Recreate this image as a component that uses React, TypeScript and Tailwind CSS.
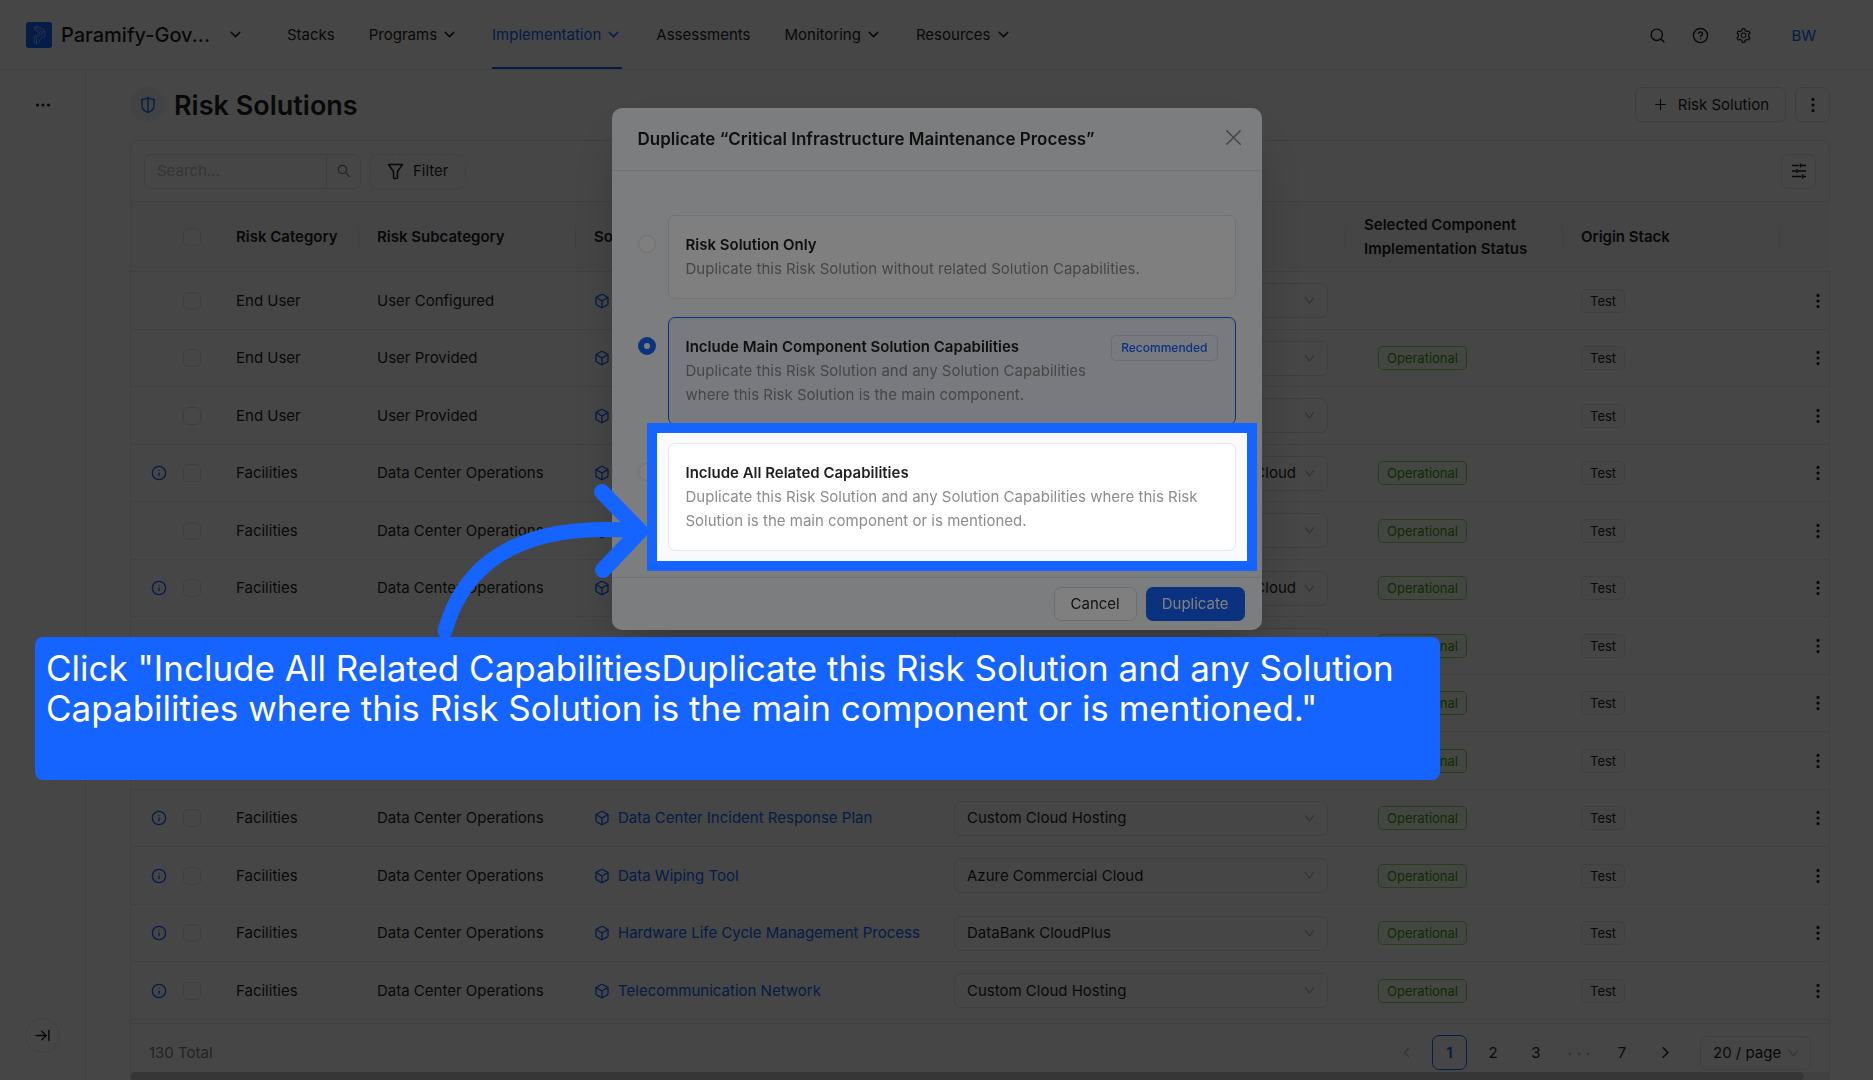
import type { ReactNode } from 'react';
import {
  ArrowRightToLine,
  Box,
  ChevronDown,
  ChevronLeft,
  ChevronRight,
  CircleHelp,
  Info,
  Plus,
  Search,
  X,
} from 'lucide-react';
import { AiOutlineDown, AiOutlineSearch, AiOutlineSetting } from 'react-icons/ai';

interface RiskSolution {
  category: string;
  subcategory: string;
  solution: string;
  component: string;
  info?: boolean;
  operational?: boolean;
}

const navItems = [
  { label: 'Stacks' },
  { label: 'Programs', menu: true },
  { label: 'Implementation', menu: true, active: true },
  { label: 'Assessments' },
  { label: 'Monitoring', menu: true },
  { label: 'Resources', menu: true },
];

const OPS = 'Data Center Operations';

const rows: RiskSolution[] = [
  { category: 'End User', subcategory: 'User Configured', solution: '', component: '' },
  { category: 'End User', subcategory: 'User Provided', solution: '', component: '', operational: true },
  { category: 'End User', subcategory: 'User Provided', solution: '', component: '' },
  { category: 'Facilities', subcategory: OPS, solution: '', component: 'Cloud', info: true, operational: true },
  { category: 'Facilities', subcategory: OPS, solution: '', component: '', operational: true },
  { category: 'Facilities', subcategory: OPS, solution: '', component: 'Cloud', info: true, operational: true },
  { category: '', subcategory: '', solution: '', component: '', operational: true },
  { category: '', subcategory: '', solution: '', component: '', operational: true },
  { category: '', subcategory: '', solution: '', component: '', operational: true },
  { category: 'Facilities', subcategory: OPS, solution: 'Data Center Incident Response Plan', component: 'Custom Cloud Hosting', info: true, operational: true },
  { category: 'Facilities', subcategory: OPS, solution: 'Data Wiping Tool', component: 'Azure Commercial Cloud', info: true, operational: true },
  { category: 'Facilities', subcategory: OPS, solution: 'Hardware Life Cycle Management Process', component: 'DataBank CloudPlus', info: true, operational: true },
  { category: 'Facilities', subcategory: OPS, solution: 'Telecommunication Network', component: 'Custom Cloud Hosting', info: true, operational: true },
];

const CHECKBOX = 'block h-[18px] w-[18px] appearance-none rounded-[5px] border border-[#e0e0e0] bg-white';

function Dots() {
  return (
    <svg width="4" height="16" viewBox="0 0 4 16" fill="currentColor" aria-hidden="true">
      <circle cx="2" cy="2.4" r="1.6" />
      <circle cx="2" cy="8" r="1.6" />
      <circle cx="2" cy="13.6" r="1.6" />
    </svg>
  );
}

function Header() {
  return (
    <header className="flex h-[70px] shrink-0 items-stretch border-b border-[#e5e7eb] bg-white pl-[26px] pr-[57px]">
      <div className="flex w-[261px] items-center">
        <svg width="26" height="26" viewBox="0 0 26 26" className="shrink-0" aria-hidden="true">
          <rect width="26" height="26" rx="3" fill="#1664ff" />
          <g fill="none" stroke="#a9c4ff" strokeWidth="0.8" strokeLinejoin="round">
            <path d="M8.500 5.500 11 4l8 5v5l-5.500 3.500V20L10.500 22 8.200 20.500v-6l6-3.500-5.700-3z" />
            <path d="M8.500 5.500 16 10.200v2l-5.500 3.300V22M11 4v2.500M19 9l-3 1.500M8.200 14.500l2.300 1.300" />
          </g>
        </svg>
        <span className="ml-[9px] text-[20px] font-medium">Paramify-Gov...</span>
        <button aria-label="Switch workspace" className="ml-auto mr-[43px]">
          <ChevronDown size={17} />
        </button>
      </div>
      <nav className="flex gap-[34px]">
        {navItems.map((item) => (
          <a
            key={item.label}
            href="#"
            className={
              item.active
                ? 'flex items-center gap-1 border-b-2 border-[#1664ff] pt-[2px] text-[#1664ff]'
                : 'flex items-center gap-1'
            }
          >
            {item.label}
            {item.menu && <ChevronDown size={17} />}
          </a>
        ))}
      </nav>
      <div className="ml-auto flex items-center gap-[26px] pt-[2px]">
        <button aria-label="Search"><Search size={17} /></button>
        <button aria-label="Help"><CircleHelp size={17} /></button>
        <button aria-label="Settings"><AiOutlineSetting size={17} /></button>
        <button className="ml-[13px] text-[#1664ff]">BW</button>
      </div>
    </header>
  );
}

function Sidebar() {
  return (
    <aside className="flex w-[86px] shrink-0 flex-col items-center justify-between border-r border-[#e5e7eb] bg-white pb-[27px] pt-[27px]">
      <button aria-label="More">
        <svg width="16" height="16" viewBox="0 0 16 16" fill="currentColor" aria-hidden="true">
          <circle cx="2.500" cy="8" r="1.600" />
          <circle cx="8" cy="8" r="1.600" />
          <circle cx="13.500" cy="8" r="1.600" />
        </svg>
      </button>
      <button aria-label="Expand sidebar" className="flex h-[35px] w-[35px] items-center justify-center rounded-full border border-[#e5e7eb]">
        <ArrowRightToLine size={17} />
      </button>
    </aside>
  );
}

function HeadCell({ children, divider = true }: { children?: ReactNode; divider?: boolean }) {
  return (
    <th scope="col" className="p-0 text-left font-semibold">
      <div className={divider ? 'flex h-6 items-center border-r border-[#e5e7eb] pl-[18px]' : 'flex h-6 items-center pl-[18px]'}>
        {children}
      </div>
    </th>
  );
}

function SolutionsTable() {
  return (
    <table className="w-full table-fixed border-collapse">
      <colgroup>
        <col className="w-[87px]" />
        <col className="w-[141px]" />
        <col className="w-[217px]" />
        <col className="w-[360px]" />
        <col className="w-[410px]" />
        <col className="w-[217px]" />
        <col className="w-[217px]" />
        <col className="w-[50px]" />
      </colgroup>
      <thead>
        <tr className="h-[70px] border-y border-[#e5e7eb] bg-[#fafafa]">
          <th scope="col" className="p-0">
            <input type="checkbox" aria-label="Select all" className={`${CHECKBOX} ml-[52px]`} />
          </th>
          <HeadCell>Risk Category</HeadCell>
          <HeadCell>Risk Subcategory</HeadCell>
          <HeadCell>Solution</HeadCell>
          <HeadCell>Component</HeadCell>
          <HeadCell>
            <span className="leading-6">
              Selected Component
              <br />
              Implementation Status
            </span>
          </HeadCell>
          <HeadCell>Origin Stack</HeadCell>
          <HeadCell divider={false} />
        </tr>
      </thead>
      <tbody>
        {rows.map((row, i) => (
          <tr key={i} className="border-b border-[#e5e7eb] odd:h-[58px] even:h-[57px]">
            <td className="p-0">
              <div className="flex items-center pl-5">
                <span className="w-8 text-[#1664ff]">{row.info && <Info size={16} />}</span>
                <input type="checkbox" aria-label={`Select row ${i + 1}`} className={CHECKBOX} />
              </div>
            </td>
            <td className="p-0 pl-[18px]">{row.category}</td>
            <td className="p-0 pl-[18px]">{row.subcategory}</td>
            <td className="p-0 pl-[18px]">
              <a href="#" className="flex items-center gap-2 text-[#1664ff]" aria-label={row.solution || 'Solution'}>
                <Box size={16} />
                {row.solution}
              </a>
            </td>
            <td className="p-0 px-[18px]">
              <div className="relative">
                <select
                  aria-label="Component"
                  className={
                    row.component === 'Cloud'
                      ? 'block h-[35px] w-full appearance-none rounded-[7px] border border-[#e0e0e0] bg-white pr-[31px] text-right'
                      : 'block h-[35px] w-full appearance-none rounded-[7px] border border-[#e0e0e0] bg-white pl-3 pr-[31px]'
                  }
                >
                  <option>{row.component}</option>
                </select>
                <AiOutlineDown size={13} className="pointer-events-none absolute right-3 top-[11px] text-[#b0b0b0]" />
              </div>
            </td>
            <td className="p-0 pl-[32px]">
              {row.operational && (
                <span className="inline-flex h-6 items-center rounded-[5px] border border-[#52c41a]/60 bg-[#f6ffed] px-2 text-[13px] text-[#389e0d]">
                  Operational
                </span>
              )}
            </td>
            <td className="p-0 pl-[18px]">
              <span className="inline-flex h-6 items-center rounded-[5px] border border-[#e5e5e5] bg-[#fafafa] px-2 text-[13px]">
                Test
              </span>
            </td>
            <td className="p-0">
              <button aria-label="Row actions" className="ml-auto mr-[10px] block"><Dots /></button>
            </td>
          </tr>
        ))}
      </tbody>
    </table>
  );
}

function Pagination() {
  return (
    <div className="flex items-center border-t border-[#e5e7eb] px-[18px] pb-[2px] pt-[11px]">
      <span className="text-[#808080]">130 Total</span>
      <div className="ml-auto flex items-center gap-[9px]">
        <button aria-label="Previous page" className="flex w-[34px] justify-center text-[#bfbfbf]"><ChevronLeft size={17} /></button>
        <button className="h-[35px] w-[35px] rounded-[7px] border border-[#1664ff] font-semibold text-[#1664ff]">1</button>
        <button className="w-[34px]">2</button>
        <button className="w-[34px]">3</button>
        <svg width="34" height="16" viewBox="0 0 34 16" fill="#bfbfbf" aria-hidden="true">
          <circle cx="8" cy="9" r="1.500" />
          <circle cx="17" cy="9" r="1.500" />
          <circle cx="26" cy="9" r="1.500" />
        </svg>
        <button className="w-[34px]">7</button>
        <button aria-label="Next page" className="flex w-[34px] justify-center"><ChevronRight size={19} /></button>
        <div className="relative ml-[9px]">
          <select aria-label="Page size" className="block h-[34px] w-[111px] appearance-none rounded-[7px] border border-[#e0e0e0] bg-white pl-3">
            <option>20 / page</option>
          </select>
          <AiOutlineDown size={13} className="pointer-events-none absolute right-[11px] top-[11px] text-[#b0b0b0]" />
        </div>
      </div>
    </div>
  );
}

function Page() {
  return (
    <main className="min-w-0 flex-1 overflow-hidden pl-[44px] pr-[43px] pt-[17px]">
      <div className="flex h-[35px] items-center">
        <span className="flex h-[35px] w-[35px] items-center justify-center rounded-full bg-[#eef3fb] text-[#1664ff]">
          <svg width="16" height="18" viewBox="0 0 16 18" fill="none" stroke="currentColor" strokeWidth="1.400" strokeLinejoin="round" aria-hidden="true">
            <path d="M8 1.500C6.500 2.700 4.500 3.300 2 3.400V10c0 3.300 2.500 5.200 6 6.500 3.500-1.300 6-3.200 6-6.500V3.400C11.500 3.300 9.500 2.700 8 1.500zM8 1.500v15" />
          </svg>
        </span>
        <h1 className="ml-[9px] pt-[2px] text-[27px] font-semibold">Risk Solutions</h1>
        <button className="ml-auto flex h-[35px] items-center gap-[9px] rounded-[7px] border border-[#e0e0e0] px-4 shadow-xs">
          <Plus size={17} strokeWidth={1.6} />
          Risk Solution
        </button>
        <button aria-label="More actions" className="ml-[9px] flex h-[35px] w-[35px] items-center justify-center rounded-[7px] border border-[#e0e0e0] shadow-xs">
          <Dots />
        </button>
      </div>
      <section className="mt-[18px] rounded-t-lg border border-b-0 border-[#e5e7eb]">
        <div className="flex h-[60px] items-center px-[13px]">
          <div className="flex h-[35px] w-[217px] rounded-[7px] border border-[#e0e0e0]">
            <input aria-label="Search" placeholder="Search..." className="min-w-0 flex-1 px-3 placeholder:text-[#bfbfbf]" />
            <button aria-label="Run search" className="flex w-[34px] items-center justify-center border-l border-[#e0e0e0] text-[#808080]">
              <AiOutlineSearch size={16} />
            </button>
          </div>
          <button className="ml-[9px] flex h-[35px] items-center gap-[9px] rounded-[7px] border border-dashed border-[#e0e0e0] px-4 shadow-xs">
            <svg width="17" height="17" viewBox="0 0 17 17" fill="none" stroke="currentColor" strokeWidth="1.500" strokeLinejoin="round" aria-hidden="true">
              <path d="M1.500 1.500h14l-5 7v6c0 .6-.4 1-1 1h-2c-.6 0-1-.4-1-1v-6z" />
            </svg>
            Filter
          </button>
          <button aria-label="Table settings" className="ml-auto flex h-[35px] w-[35px] items-center justify-center rounded-[7px] border border-[#e0e0e0]">
            <svg width="16" height="16" viewBox="0 0 16 16" stroke="currentColor" strokeWidth="1.500" aria-hidden="true">
              <path d="M1 2.500h7M10 2.500h5M9.500.5v4M1 8h4M7 8h8M6 6v4M1 13.500h9M12 13.500h3M11.500 11.500v4" />
            </svg>
          </button>
        </div>
        <SolutionsTable />
        <div className="mt-[3px]">
          <Pagination />
        </div>
        <div className="h-[9px] bg-[#ededed] pr-[25px]">
          <div className="h-full rounded-[5px] bg-[#c1c4c2]" />
        </div>
      </section>
    </main>
  );
}

function Option({ title, tag, checked, children, spotlight }: { title: string; tag?: string; checked?: boolean; children: ReactNode; spotlight?: boolean }) {
  return (
    <label className="flex items-start gap-3">
      <input
        type="radio"
        name="scope"
        defaultChecked={checked}
        className="mt-5 h-[18px] w-[18px] shrink-0 appearance-none rounded-full border border-[#e0e0e0] bg-white checked:border-[6px] checked:border-[#1664ff]"
      />
      <span
        className={
          checked
            ? 'relative flex flex-1 items-start gap-4 rounded-[7px] border border-[#1664ff] bg-[#f0f5ff] p-[17px]'
            : 'relative flex flex-1 items-start gap-4 rounded-[7px] border border-[#e5e7eb] bg-white p-[17px]'
        }
      >
        <span className="flex-1">
          <span className="block font-semibold">{title}</span>
          <span className="block text-[#8c8c8c]">{children}</span>
        </span>
        {tag && (
          <span className="flex h-[26px] items-center rounded-[5px] border border-[#d9d9d9] px-[9px] text-[12px] font-medium text-[#1664ff]">
            {tag}
          </span>
        )}
        {spotlight && (
          <span className="pointer-events-none absolute -inset-x-[22px] -inset-y-[21px] border-[10px] border-[#1664ff] shadow-[0_0_0_9999px_rgba(0,0,0,0.5)]" />
        )}
      </span>
    </label>
  );
}

function DuplicateModal() {
  return (
    <div className="fixed inset-0 flex items-start justify-center bg-black/45 pt-[108px]">
      <div role="dialog" aria-labelledby="dialog-title" className="w-[650px] rounded-[10px] bg-[#f9fafc] shadow-2xl">
        <div className="flex h-[63px] items-center justify-between border-b border-[#e5e7eb] pl-[26px] pr-[15px]">
          <h2 id="dialog-title" className="text-[17px] font-semibold">
            Duplicate “Critical Infrastructure Maintenance Process”
          </h2>
          <button aria-label="Close" className="pb-1 text-[#808080]"><X size={27} strokeWidth={1.2} /></button>
        </div>
        <div className="flex flex-col gap-[18px] px-[26px] pb-[26px] pt-[44px]">
          <Option title="Risk Solution Only">
            Duplicate this Risk Solution without related Solution Capabilities.
          </Option>
          <Option title="Include Main Component Solution Capabilities" tag="Recommended" checked>
            Duplicate this Risk Solution and any Solution Capabilities where this Risk Solution is the main component.
          </Option>
          <Option title="Include All Related Capabilities" spotlight>
            Duplicate this Risk Solution and any Solution Capabilities where this Risk Solution is the main component or is mentioned.
          </Option>
        </div>
        <div className="flex justify-end gap-[9px] border-t border-[#e5e7eb] px-[17px] py-[9px]">
          <button className="h-[34px] rounded-[7px] border border-[#d9d9d9] bg-white px-4">Cancel</button>
          <button className="h-[34px] rounded-[7px] bg-[#1664ff] px-4 text-white">Duplicate</button>
        </div>
      </div>
    </div>
  );
}

function Callout() {
  return (
    <div className="fixed left-[35px] top-[637px] h-[143px] w-3/4 rounded-lg bg-[#1664ff] px-[11px] pt-[11px] text-[35px] leading-10 text-white">
      <p>
        Click "Include All Related CapabilitiesDuplicate this Risk Solution and any Solution Capabilities where this Risk
        Solution is the main component or is mentioned."
      </p>
      <svg
        width="240"
        height="170"
        viewBox="0 0 240 170"
        fill="none"
        stroke="#1664ff"
        strokeWidth="15"
        strokeLinecap="round"
        className="absolute -top-[162px] left-[385px]"
        aria-hidden="true"
      >
        <path d="M25 156C41 98 88 45 218 56" />
        <path d="M182 17l38 39-37 39" strokeLinejoin="round" strokeWidth="16" />
      </svg>
    </div>
  );
}

export default function App() {
  return (
    <div className="relative flex h-screen flex-col overflow-hidden bg-white font-['Inter','Liberation_Sans',sans-serif] text-[15px] leading-6 text-[#1f1f1f]">
      <Header />
      <div className="flex min-h-0 flex-1">
        <Sidebar />
        <Page />
      </div>
      <DuplicateModal />
      <Callout />
    </div>
  );
}
